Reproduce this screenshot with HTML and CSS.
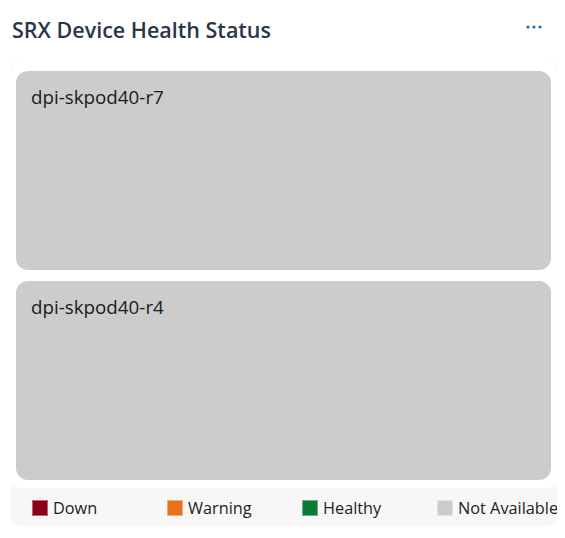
FILE: index.html
```html
<!DOCTYPE html>
<html lang="en">
<head>
    <meta charset="UTF-8">
    <title>SRX Device Health Status</title>
    <link rel="stylesheet" href="styles.css">
</head>
<body>
    <div class="widget">
        <div class="header">
            <h2>SRX Device Health Status</h2>
            <svg class="more" width="16" height="4" viewBox="0 0 16 4">
                <circle cx="2" cy="2" r="1.6" fill="#1f6fb2"/>
                <circle cx="8" cy="2" r="1.6" fill="#1f6fb2"/>
                <circle cx="14" cy="2" r="1.6" fill="#1f6fb2"/>
            </svg>
        </div>

        <div class="chart">
            <div class="map">
                <div class="tile">dpi-skpod40-r7</div>
                <div class="tile">dpi-skpod40-r4</div>
            </div>
            <div class="legend">
                <div class="legend-item"><span class="swatch down"></span>Down</div>
                <div class="legend-item"><span class="swatch warning"></span>Warning</div>
                <div class="legend-item"><span class="swatch healthy"></span>Healthy</div>
                <div class="legend-item"><span class="swatch na"></span>Not Available</div>
            </div>
        </div>
    </div>
</body>
</html>
```

FILE: styles.css
```css
body {
    margin: 0;
    background: #ffffff;
    font-family: 'Open Sans', 'Noto Sans', sans-serif;
}

.widget {
    width: 565px;
    height: 538px;
    overflow: hidden;
}

.header {
    display: flex;
    align-items: center;
    justify-content: space-between;
    padding: 12px 23px 0 12px;
    height: 34px;
}

h2 {
    margin: 0;
    font-size: 21.5px;
    font-weight: 600;
    color: #2b3648;
}

.more {
    display: block;
    margin-bottom: 4px;
}

.chart {
    margin: 16px 0 0 11px;
    width: 546px;
    background: #f7f7f7;
    border-radius: 8px;
    overflow: hidden;
}

.map {
    background: #ffffff;
    border-radius: 10px;
    padding: 9px 6px 8px 5px;
    display: flex;
    flex-direction: column;
    gap: 11px;
}

.tile {
    background: #cccccc;
    border-radius: 12px;
    height: 199px;
    box-sizing: border-box;
    padding: 13px 15px;
    font-size: 18.8px;
    color: #1a1a1a;
}

.legend {
    display: grid;
    grid-template-columns: 135px 135px 135px 1fr;
    padding: 1px 0 0 21px;
    height: 37px;
    align-items: center;
}

.legend-item {
    display: flex;
    align-items: center;
    gap: 5px;
    font-size: 16.3px;
    color: #222;
    white-space: nowrap;
}

.swatch {
    width: 16px;
    height: 16px;
    box-sizing: border-box;
    border: 1px solid rgba(255, 255, 255, 0.4);
}

.down { background: #8b0016; }
.warning { background: #e8711b; }
.healthy { background: #0b7a36; }
.na { background: #cccccc; }
```
